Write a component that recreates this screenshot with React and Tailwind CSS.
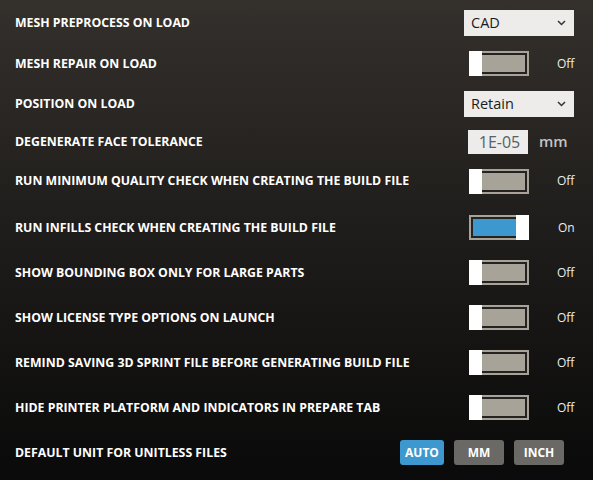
const rows = [
  { label: 'MESH PREPROCESS ON LOAD', type: 'select', value: 'CAD', h: 'h-[45px]' },
  { label: 'MESH REPAIR ON LOAD', type: 'toggle', on: false, h: 'h-[37px]' },
  { label: 'POSITION ON LOAD', type: 'select', value: 'Retain', h: 'h-[44px]' },
  { label: 'DEGENERATE FACE TOLERANCE', type: 'number', value: '1E-05', h: 'h-[31px]' },
  { label: 'RUN MINIMUM QUALITY CHECK WHEN CREATING THE BUILD FILE', type: 'toggle', on: false, h: 'h-[48px]' },
  { label: 'RUN INFILLS CHECK WHEN CREATING THE BUILD FILE', type: 'toggle', on: true, h: 'h-[45px]' },
  { label: 'SHOW BOUNDING BOX ONLY FOR LARGE PARTS', type: 'toggle', on: false, h: 'h-[45px]' },
  { label: 'SHOW LICENSE TYPE OPTIONS ON LAUNCH', type: 'toggle', on: false, h: 'h-[45px]' },
  { label: 'REMIND SAVING 3D SPRINT FILE BEFORE GENERATING BUILD FILE', type: 'toggle', on: false, h: 'h-[45px]' },
  { label: 'HIDE PRINTER PLATFORM AND INDICATORS IN PREPARE TAB', type: 'toggle', on: false, h: 'h-[45px]' },
  { label: 'DEFAULT UNIT FOR UNITLESS FILES', type: 'units', h: 'h-[45px]' },
];

const Select = ({ value }) => (
  <div className="ml-[64px] w-[110px] h-[26px] bg-[#edecea] flex items-center justify-between pl-[7px] pr-[8px]">
    <span className="text-[14.5px] text-[#1b1b1b]">{value}</span>
    <svg width="9" height="6" viewBox="0 0 9 6">
      <polyline points="1,1 4.5,4.5 8,1" fill="none" stroke="#333" strokeWidth="1.5" />
    </svg>
  </div>
);

const Toggle = ({ on }) => (
  <div className="ml-[69px] flex items-center">
    <div className="relative w-[60px] h-[25px] bg-[#a8a399] p-[2px]">
      <div className={`h-full border-2 border-[#242322] ${on ? 'bg-[#3d98cf]' : 'bg-[#a8a399]'}`} />
      <div className={`absolute top-0 bottom-0 w-[13px] bg-white ${on ? 'right-0' : 'left-0'}`} />
    </div>
    <span className={`text-[12px] text-[#ececec] ${on ? 'ml-[29px]' : 'ml-[28px]'}`}>{on ? 'On' : 'Off'}</span>
  </div>
);

const NumberField = ({ value }) => (
  <div className="ml-[68px] flex items-center">
    <div className="w-[60px] h-[24px] bg-[#edecea] flex items-center justify-center pl-[3px] text-[16px] text-[#56606b]">
      {value}
    </div>
    <span className="ml-[11px] text-[15px] font-semibold text-[#c4c4c4]">mm</span>
  </div>
);

const Units = () => (
  <div className="flex items-center gap-[10px] text-[12px] font-bold text-white">
    <button className="w-[44px] h-[25px] rounded-[3px] bg-[#3d98cf]">AUTO</button>
    <button className="w-[50px] h-[25px] rounded-[3px] bg-[#6a6965]">MM</button>
    <button className="w-[50px] h-[25px] rounded-[3px] bg-[#6a6965]">INCH</button>
  </div>
);

export default function App() {
  return (
    <div
      className="w-[593px] h-[480px] overflow-hidden bg-linear-to-b from-[#34302c] to-[#0a0a0a] flex flex-col"
      style={{ fontFamily: '"Open Sans", sans-serif' }}
    >
      {rows.map((r) => (
        <div key={r.label} className={`${r.h} flex items-center shrink-0`}>
          <div className="flex-1 min-w-0 pl-[15px] pt-px text-[12.3px] font-bold text-white whitespace-nowrap">{r.label}</div>
          <div className="w-[193px] shrink-0 flex items-center">
            {r.type === 'select' && <Select value={r.value} />}
            {r.type === 'toggle' && <Toggle on={r.on} />}
            {r.type === 'number' && <NumberField value={r.value} />}
            {r.type === 'units' && <Units />}
          </div>
        </div>
      ))}
    </div>
  );
}
